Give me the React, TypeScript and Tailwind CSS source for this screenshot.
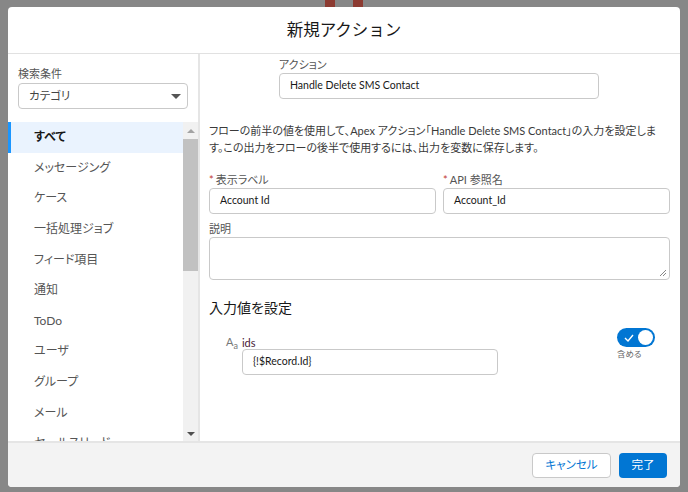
const FONT = { fontFamily: 'Lato, "Noto Sans CJK JP", sans-serif' };

const categories = [
    "すべて",
    "メッセージング",
    "ケース",
    "一括処理ジョブ",
    "フィード項目",
    "通知",
    "ToDo",
    "ユーザ",
    "グループ",
    "メール",
    "セールスリード",
];

function CategoryList() {
    return (
        <div className="flex h-[320px] overflow-hidden">
            <ul className="flex w-[176px] flex-col">
                {categories.map((c, i) => (
                    <li
                        key={c}
                        className={
                            i === 0
                                ? "flex h-[30.6px] shrink-0 items-center border-l-[3px] border-[#1b96ff] bg-[#eaf3fe] pl-[23px] text-[12px] font-bold text-[#181818]"
                                : "flex h-[30.6px] shrink-0 items-center pl-[26px] text-[12px] text-[#555]"
                        }
                    >
                        {c}
                    </li>
                ))}
            </ul>
            {/* scrollbar */}
            <div className="flex w-[15px] flex-col bg-[#f1f1f1]">
                <div className="flex h-[17px] items-center justify-center">
                    <div className="h-0 w-0 border-x-[4px] border-b-[4px] border-x-transparent border-b-[#a3a3a3]" />
                </div>
                <div className="h-[132px] bg-[#c1c1c1]" />
                <div className="flex-1" />
                <div className="flex h-[17px] items-center justify-center">
                    <div className="h-0 w-0 border-x-[4px] border-t-[4px] border-x-transparent border-t-[#505050]" />
                </div>
            </div>
        </div>
    );
}

function Field({ label, value, required }: { label: string; value: string; required?: boolean }) {
    return (
        <div className="flex flex-1 flex-col">
            <label className="h-[16px] text-[11px] leading-[16px] text-[#555]">
                {required && <span className="mr-[2px] text-[#c23934]">*</span>}
                {label}
            </label>
            <div className="flex h-[26px] items-center rounded-[4px] border border-[#c9c9c9] bg-white px-[10px] text-[10.5px] text-[#181818]">
                {value}
            </div>
        </div>
    );
}

export default function App() {
    return (
        <div
            className="relative h-[492px] w-[688px] overflow-hidden bg-[#878787] pl-[8px] pt-[7px] [font-feature-settings:'palt']"
            style={FONT}
        >
            <div className="absolute left-[325px] top-0 h-[7px] w-[10px] bg-[#8c3a31]" />
            <div className="absolute left-[353px] top-0 h-[7px] w-[10px] bg-[#8c3a31]" />

            <div className="relative flex h-[480px] w-[672px] flex-col overflow-hidden rounded-[4px] bg-white">
                <header className="flex h-[47px] shrink-0 items-center justify-center border-b border-[#e1e1e1]">
                    <h2 className="text-[16.5px] text-[#181818] [font-feature-settings:normal]">新規アクション</h2>
                </header>

                <div className="flex h-[387px] shrink-0">
                    {/* left */}
                    <aside className="flex w-[192px] shrink-0 flex-col border-r-2 border-[#e5e5e5]">
                        <div className="px-[10px] pt-[12px]">
                            <div className="h-[16px] text-[11px] leading-[16px] text-[#555]">検索条件</div>
                            <div className="mt-[1px] flex h-[26px] items-center justify-between rounded-[4px] border border-[#c9c9c9] pl-[10px] pr-[6px] text-[11.5px] text-[#444]">
                                <span>カテゴリ</span>
                                <div className="h-0 w-0 border-x-[5px] border-t-[5px] border-x-transparent border-t-[#555]" />
                            </div>
                        </div>
                        <div className="mt-[13px]">
                            <CategoryList />
                        </div>
                    </aside>

                    {/* right */}
                    <section className="flex flex-1 flex-col pl-[9px] pr-[10px] pt-[3px]">
                        <div className="ml-[70px] w-[320px]">
                            <Field label="アクション" value="Handle Delete SMS Contact" />
                        </div>

                        <p className="mt-[23px] text-[11px] leading-[17px] text-[#3a3a3a]">
                            フローの前半の値を使用して、Apex アクション「Handle Delete SMS Contact」の入力を設定します。この出力をフローの後半で使用するには、出力を変数に保存します。
                        </p>

                        <div className="mt-[16px] flex gap-[7px]">
                            <Field label="表示ラベル" value="Account Id" required />
                            <Field label="API 参照名" value="Account_Id" required />
                        </div>

                        <div className="mt-[6px] flex flex-col">
                            <label className="h-[17px] text-[11px] leading-[17px] text-[#555]">説明</label>
                            <div className="relative h-[43px] rounded-[4px] border border-[#c9c9c9]">
                                <svg className="absolute bottom-[2px] right-[2px]" width="8" height="8" viewBox="0 0 8 8">
                                    <path d="M7 1L1 7M7 4L4 7" stroke="#888" strokeWidth="1" />
                                </svg>
                            </div>
                        </div>

                        <h3 className="mt-[17px] text-[14px] text-[#181818]">入力値を設定</h3>

                        <div className="mt-[15px] flex justify-between pl-[17px] pr-[15px]">
                            <div className="flex gap-[4px]">
                                <span className="mt-[3px] text-[11px] leading-[12px] text-[#777]">
                                    A<span className="relative top-[3px] text-[9px]">a</span>
                                </span>
                                <div className="flex flex-col">
                                    <span className="mt-[3px] h-[13px] text-[11px] leading-[13px] text-[#4a2035]">ids</span>
                                    <div className="flex h-[26px] w-[256px] items-center rounded-[4px] border border-[#c9c9c9] px-[10px] text-[10.5px] text-[#181818]">
                                        {"{!$Record.Id}"}
                                    </div>
                                </div>
                            </div>
                            <div className="-mt-[5px] flex flex-col">
                                <div className="flex h-[19px] w-[38px] items-center justify-between rounded-full bg-[#0176d3] pl-[7px] pr-[2px]">
                                    <svg width="10" height="8" viewBox="0 0 10 8">
                                        <path d="M1 4l3 3 5-6" fill="none" stroke="white" strokeWidth="1.4" />
                                    </svg>
                                    <div className="h-[15px] w-[15px] rounded-full bg-white" />
                                </div>
                                <span className="mt-[1px] text-[8.5px] text-[#666]">含める</span>
                            </div>
                        </div>
                    </section>
                </div>

                <footer className="flex flex-1 items-center justify-end gap-[8px] border-t-2 border-[#e5e5e5] bg-[#f3f3f3] pr-[13px]">
                    <button className="h-[25px] w-[79px] rounded-[4px] border border-[#c9c9c9] bg-white text-[11.5px] text-[#0176d3]">
                        キャンセル
                    </button>
                    <button className="h-[25px] w-[48px] rounded-[4px] bg-[#0176d3] text-[11.5px] text-white">完了</button>
                </footer>
            </div>
        </div>
    );
}
